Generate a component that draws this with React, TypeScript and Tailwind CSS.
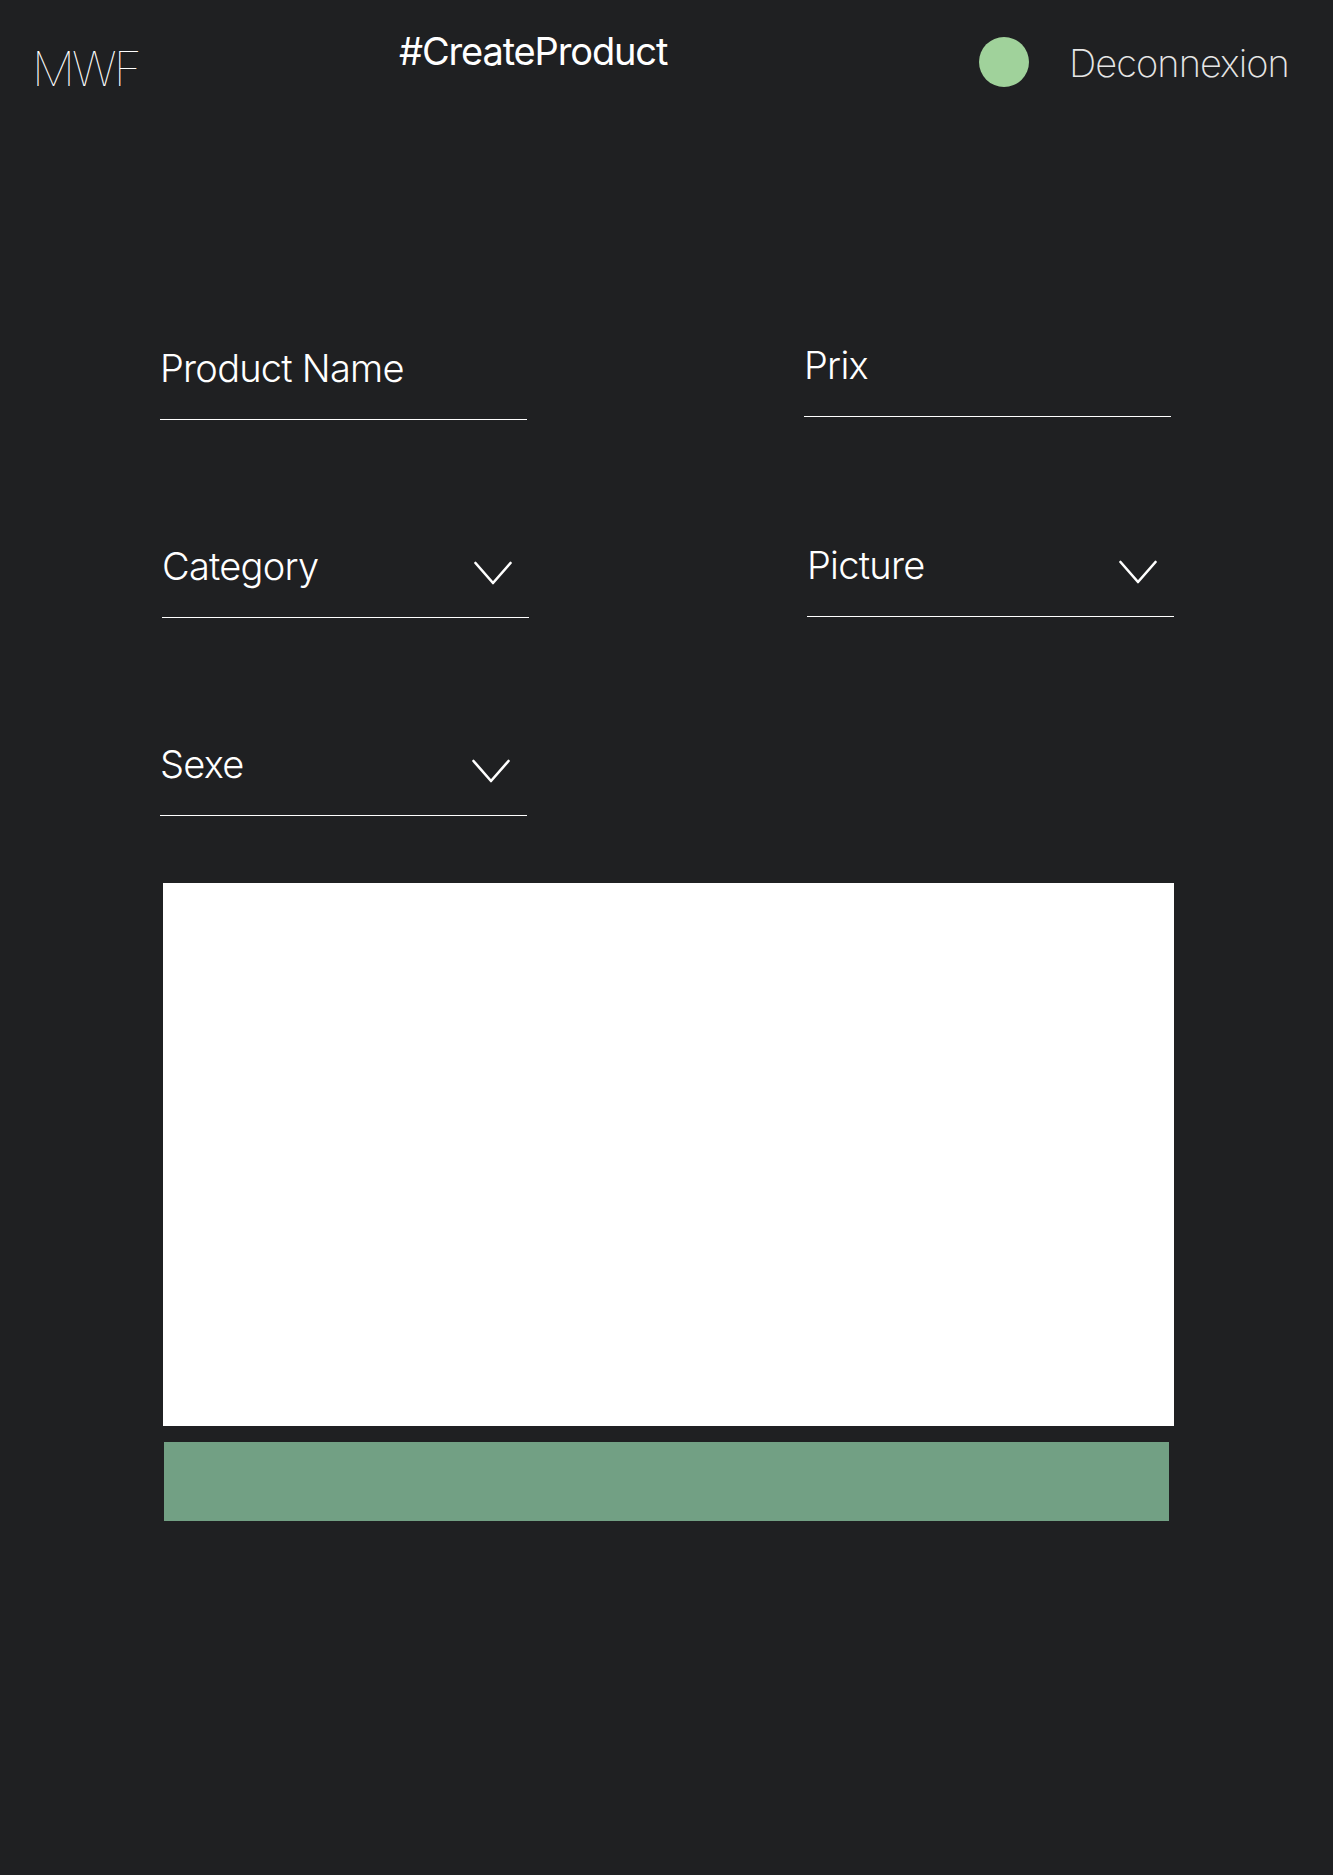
const Chevron = () => (
  <svg width="38" height="24" viewBox="0 0 38 24" fill="none" className="shrink-0">
    <polyline points="1.5,2 19,22 36.5,2" stroke="white" strokeWidth="2.6" strokeLinecap="round" strokeLinejoin="round" />
  </svg>
);

function Field({ label, select, className = '' }: { label: string; select?: boolean; className?: string }) {
  return (
    <div className={`w-[367px] border-b border-white pb-[32px] flex items-start justify-between ${className}`}>
      <span className="text-[38px] leading-none font-light tracking-[-0.02em] text-white">{label}</span>
      {select && (
        <span className="mt-[14px] mr-[17px]">
          <Chevron />
        </span>
      )}
    </div>
  );
}

export default function App() {
  return (
    <div className="min-h-[1875px] w-full bg-[#1f2022] font-['Inter','Roboto',sans-serif] text-white">
      <header className="flex items-start pl-[32px]">
        <div className="w-[367px] pt-[45px]">
          <span className="block text-[48px] leading-none font-thin tracking-[-0.06em]">MWF</span>
        </div>
        <div className="w-[580px] pt-[32px]">
          <h1 className="text-[38px] leading-none font-normal tracking-[-0.03em]">#CreateProduct</h1>
        </div>
        <div className="mt-[37px] w-[50px] h-[50px] rounded-full bg-[#a0d29b]" />
        <button className="ml-[40px] pt-[44px] text-[38px] leading-none font-extralight tracking-[-0.025em] text-[#e6e6e6]">
          Deconnexion
        </button>
      </header>

      <main className="pl-[160px] pt-[256px]">
        <div className="grid grid-cols-[367px_367px] gap-x-[277px] gap-y-[127px]">
          <Field label="Product Name" />
          <Field label="Prix" className="-mt-[3px] mb-[3px]" />
          <Field label="Category" select className="ml-[2px]" />
          <Field label="Picture" select className="ml-[3px] -mt-[1px] mb-[1px]" />
          <Field label="Sexe" select />
        </div>

        <div className="ml-[3px] mt-[67px] w-[1011px] h-[543px] bg-white" />
        <button className="ml-[4px] mt-[16px] block w-[1005px] h-[79px] bg-[#72a084]" />
      </main>
    </div>
  );
}
